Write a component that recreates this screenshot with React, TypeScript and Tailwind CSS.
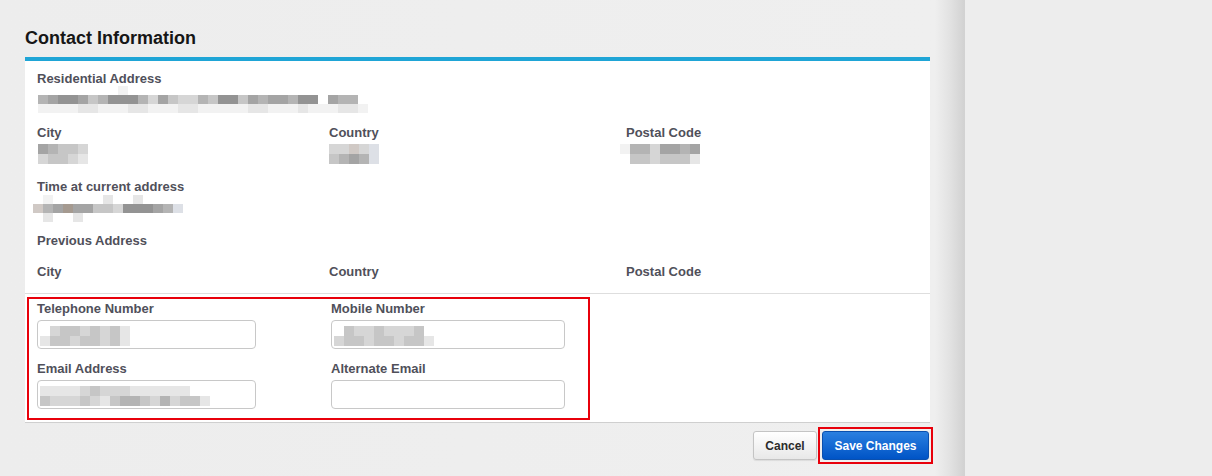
import React from "react";

const shades: Record<string, string> = {
  "0": "transparent",
  "1": "#f2f2f2",
  "2": "#e6e6e6",
  "3": "#d6d6d6",
  "4": "#c6c6c6",
  "5": "#b4b4b4",
  "6": "#a4a4a4",
  "7": "#939393",
  "8": "#7e7a78",
  a: "#d0c9c5",
  b: "#dde0e6",
  c: "#a59a90",
};

// blurred (redacted) value, one char per 10px cell
function Pix({ rows, h = 10 }: { rows: string[]; h?: number }) {
  return (
    <div className="flex flex-col">
      {rows.map((r, i) => (
        <div key={i} className="flex">
          {r.split("").map((c, j) => (
            <div
              key={j}
              className="w-[10px]"
              style={{ height: h, background: shades[c] ?? "transparent" }}
            />
          ))}
        </div>
      ))}
    </div>
  );
}

function Label({ children }: { children: React.ReactNode }) {
  return (
    <div className="text-[13px] leading-[16px] font-bold text-[#50505a]">
      {children}
    </div>
  );
}

function Field({
  label,
  rows,
  wide,
}: {
  label: string;
  rows?: string[];
  wide?: boolean;
}) {
  return (
    <div className="w-[234px]">
      <Label>{label}</Label>
      <div
        className={`mt-[3px] h-[29px] rounded-[4px] border border-[#c8c8c8] bg-white pl-[2px] pt-[5px] ${
          wide ? "w-[234px]" : "w-[219px]"
        }`}
      >
        {rows && <Pix rows={rows} />}
      </div>
    </div>
  );
}

export default function App() {
  return (
    <div className="flex h-[476px] w-full overflow-hidden bg-[#ededed] font-['Liberation_Sans',Arial,sans-serif]">
      <div className="w-[965px] shrink-0 pl-[25px] pr-[35px] bg-[linear-gradient(to_right,#ededed_0px,#efefef_935px,#e2e2e2_950px,#d2d2d2_964px)]">
        <h2 className="pt-[26px] text-[18px] leading-[24px] font-bold text-[#161616]">
          Contact Information
        </h2>

        <div className="mt-[7px] border-t-4 border-[#1fa5d6] bg-white border-b border-b-[#cfcfcf]">
          <div className="px-[12px] pt-[10px]">
            <Label>Residential Address</Label>
            <div className="mt-[-1px] ml-[1px]">
              <Pix
                h={9}
                rows={[
                  "0000000010000000000000000000000000",
                  "56776457775364335477465665770655",
                  "1111221112211122111112211121112210",
                ]}
              />
            </div>

            <div className="mt-[12px] grid grid-cols-[292px_297px_1fr]">
              <div>
                <Label>City</Label>
                <div className="mt-[3px] ml-[1px]">
                  <Pix rows={["65443", "34432"]} />
                </div>
              </div>
              <div>
                <Label>Country</Label>
                <div className="mt-[3px]">
                  <Pix rows={["33a3b", "4565b"]} />
                </div>
              </div>
              <div>
                <Label>Postal Code</Label>
                <div className="mt-[3px] -ml-[6px]">
                  <Pix rows={["15536656", "04434442"]} />
                </div>
              </div>
            </div>

            <div className="mt-[15px]">
              <Label>Time at current address</Label>
              <div className="-ml-[4px]">
                <Pix
                  h={9}
                  rows={[
                    "010000020020000",
                    "a56c6644377765b",
                    "020020000000000",
                  ]}
                />
              </div>
            </div>

            <div className="mt-[11px]">
              <Label>Previous Address</Label>
            </div>

            <div className="mt-[15px] grid grid-cols-[292px_297px_1fr] pb-[13px]">
              <Label>City</Label>
              <Label>Country</Label>
              <Label>Postal Code</Label>
            </div>
          </div>

          <div className="border-t border-[#dedede] pt-[3px] pb-[2px] pl-[2px]">
            <div className="w-[563px] border-2 border-[#e8000b] pl-[8px] pt-[2px] pb-[9px]">
              <div className="flex gap-[60px]">
                <Field label="Telephone Number" rows={["0344343420", "2443443420"]} />
                <Field label="Mobile Number" wide rows={["0433433340", "34434434420"]} />
              </div>
              <div className="mt-[12px] flex gap-[60px]">
                <Field
                  label="Email Address"
                  rows={["22223433322222200", "43334324554353442"]}
                />
                <Field label="Alternate Email" wide />
              </div>
            </div>
          </div>
        </div>

        <div className="mt-[4px] -mr-[3px] flex items-center justify-end">
          <button className="h-[29px] w-[64px] rounded-[3px] border border-[#c4c4c4] bg-[linear-gradient(#ffffff,#e8e8e8)] text-[12px] font-bold text-[#2c2c2c] shadow-[0_1px_1px_rgba(0,0,0,0.08)]">
            Cancel
          </button>
          <div className="ml-[1px] border-2 border-[#e8000b] p-[2px]">
            <button className="h-[29px] w-[107px] rounded-[3px] border border-[#0a4fae] bg-[linear-gradient(#2a7fe0,#0054c6)] text-[12px] font-bold text-white">
              Save Changes
            </button>
          </div>
        </div>
      </div>
      <div className="flex-1 bg-[#ededed]" />
    </div>
  );
}
